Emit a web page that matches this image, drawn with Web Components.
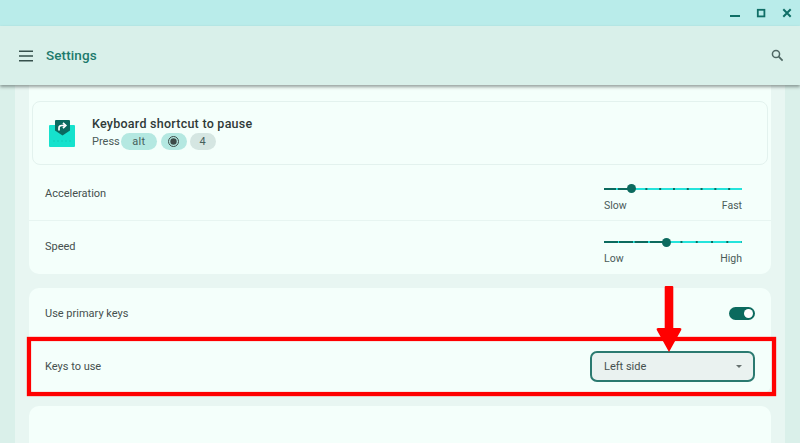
<!DOCTYPE html>
<html><head><meta charset="utf-8"><style>
html,body{margin:0;padding:0;height:443px;width:800px;overflow:hidden;background:#daf0ea;font-family:Roboto,"Liberation Sans",sans-serif;color:#3c4a47}
</style></head><body>
<settings-app></settings-app>
<script>
function def(name,css,html){
  customElements.define(name,class extends HTMLElement{
    constructor(){super();const s=this.attachShadow({mode:'open'});s.innerHTML='<style>'+css+'</style>'+(typeof html==='function'?html(this):html);}
  });
}
def('window-bar',`:host{display:flex;justify-content:flex-end;align-items:center;height:26px;background:#b9ecea;gap:10px;padding-right:5px;box-sizing:border-box;flex:none}
svg{width:16px;height:16px;display:block}`,
`<svg viewBox="0 0 16 16"><path d="M3 11h10" stroke="#0f6e66" stroke-width="2" fill="none"/></svg>
<svg viewBox="0 0 16 16"><rect x="4.8" y="4.8" width="6.6" height="6.6" fill="none" stroke="#0f6e66" stroke-width="1.8"/></svg>
<svg viewBox="0 0 16 16"><path d="M4.3 4.3l7.4 7.4M11.700 4.3l-7.4 7.4" stroke="#0f6e66" stroke-width="2" fill="none"/></svg>`);
def('app-bar',`:host{display:flex;align-items:center;height:59px;background:#d9f0ea;padding:0 17px 0 19px;box-sizing:border-box;flex:none;box-shadow:0 2px 3px rgba(60,70,68,.5);position:relative;z-index:1}
svg{display:block}
.t{font:500 13.5px Roboto,sans-serif;color:#1d7a6d;margin-left:13px;flex:1;letter-spacing:.1px;padding-bottom:2px}`,
`<svg width="14" height="12" viewBox="0 0 14 12"><path d="M0 1.2h14M0 6h14M0 10.8h14" stroke="#36504c" stroke-width="1.5"/></svg>
<span class="t">Settings</span>
<svg width="12.5" height="12.5" viewBox="0 0 14 14"><circle cx="5.6" cy="5.6" r="4" fill="none" stroke="#4f6764" stroke-width="1.7"/><path d="M8.6 8.6l4.4 4.4" stroke="#4f6764" stroke-width="2"/></svg>`);
def('key-chip',`:host{display:inline-flex;align-items:center;justify-content:center;height:17px;border-radius:9px;font-size:11px;color:#45605b;background:var(--bg,#b4e8e1);width:var(--w,36px);letter-spacing:.3px}`,`<slot></slot>`);
def('shortcut-card',`:host{display:flex;align-items:center;height:64px;margin:0 3px;border:1px solid #e3f2ee;border-radius:8px;box-sizing:border-box;padding-left:15px;flex:none}
svg{display:block;margin-right:16px}
.h{font:500 12.5px Roboto,sans-serif;color:#2f3a38;letter-spacing:.25px;margin-bottom:2px}
.p{display:flex;align-items:center;gap:3px;font-size:11px;color:#4a5b58}
.p span{margin-right:-2px}`,
`<svg width="28" height="30" viewBox="0 0 28 30"><rect x="1" y="7" width="26" height="22" rx="1" fill="#16e2cd"/><path d="M7 3a1 1 0 0 1 1-1h13a1 1 0 0 1 1 1v9.500l-7.500 5-7.500-5z" fill="#0a6a5f"/><path d="M11 12.500v-2.600c0-1.400 1-2.400 2.500-2.400h3M15 4.800l2.800 2.700-2.800 2.700" fill="none" stroke="#fff" stroke-width="1.700"/><path d="M5 23h18" stroke="#0fc2ad" stroke-width=".6" stroke-dasharray="2 2"/></svg>
<div><div class="h">Keyboard shortcut to pause</div>
<div class="p"><span>Press</span><key-chip>alt</key-chip><key-chip style="--w:26px;margin-left:1px"><svg width="13" height="13" viewBox="0 0 13 13" style="margin:0"><circle cx="6.500" cy="6.500" r="5" fill="none" stroke="#3c4a47" stroke-width="1"/><circle cx="6.500" cy="6.500" r="3.200" fill="#3c4a47"/></svg></key-chip><key-chip style="--w:26px;--bg:#d5e6e2">4</key-chip></div></div>`);
def('range-slider',`:host{display:block;width:138px;margin-top:13px}
.tr{height:2px;position:relative;background:#25e4dc;margin-bottom:10px}
.f{position:absolute;left:0;top:0;height:2px;width:var(--p);background:repeating-linear-gradient(90deg,#0c6a5e 0 calc(var(--s) - 1.500px),transparent calc(var(--s) - 1.500px) var(--s))}
.d{position:absolute;inset:0;background:radial-gradient(circle at 0.750px 1px,#0c6a5e 1px,transparent 1.200px) 0 0/var(--s,13.800px) 2px repeat-x}
.k{position:absolute;left:var(--p);top:-3.500px;width:9px;height:9px;margin-left:-4.500px;border-radius:50%;background:#0c6a5e}
.l{display:flex;justify-content:space-between;font-size:10.500px;line-height:12px;color:#4a5b58}`,
h=>`<div class="tr" style="--p:${h.getAttribute('p')};--s:${h.getAttribute('s')}"><div class="d"></div><div class="f"></div><div class="k"></div></div><div class="l"><span>${h.getAttribute('a')}</span><span>${h.getAttribute('b')}</span></div>`);
def('setting-row',`:host{display:flex;align-items:center;justify-content:space-between;height:53px;padding:0 29px var(--pb,1px) 16px;box-sizing:border-box;font-size:11px;color:#45504e;flex:none}
:host([line]){border-top:1px solid #e7f5f1}`,`<span><slot name="label"></slot></span><slot></slot>`);
def('toggle-switch',`:host{display:block;width:26px;height:13px;border-radius:7px;background:#0c6a5e;position:relative}
i{position:absolute;right:2px;top:2px;width:9px;height:9px;border-radius:50%;background:#fff}`,`<i></i>`);
def('select-box',`:host{display:flex;align-items:center;justify-content:space-between;width:165px;height:31px;box-sizing:border-box;border:2px solid #2b7a70;border-radius:7px;background:#eaf2f0;padding:0 11px 0 12px;font-size:11px;color:#45504e}
i{width:0;height:0;border:3px solid transparent;border-top:3.500px solid #66716f;border-bottom:0}`,`<slot></slot><i></i>`);
def('set-card',`:host{display:flex;flex-direction:column;background:#f4fffb;border-radius:10px;flex:none}`,`<slot></slot>`);
def('settings-app',`:host{display:flex;flex-direction:column;height:443px;position:relative;overflow:hidden}
.body{flex:1;margin:0 15px;background:#e8f6f2;padding:0 14px;display:flex;flex-direction:column;gap:12px;overflow:hidden}
.first{padding-top:16px;padding-bottom:1px;border-radius:0 0 10px 10px;margin-bottom:2px}
.second{--pb:2px}
.mk{position:absolute}
.box{left:27px;top:337px;width:749px;height:59px;border:4px solid #f00;box-sizing:border-box;box-shadow:0 0 1px #f00,inset 0 0 1px #f00}
.ar{left:656px;top:286px}`,
`<window-bar></window-bar><app-bar></app-bar>
<div class="body">
<set-card class="first"><shortcut-card></shortcut-card>
<setting-row style="margin-top:2px"><span slot="label">Acceleration</span><range-slider p="20%" s="13.8px" a="Slow" b="Fast"></range-slider></setting-row>
<setting-row line><span slot="label">Speed</span><range-slider p="45%" s="15.3px" a="Low" b="High"></range-slider></setting-row></set-card>
<set-card class="second"><setting-row><span slot="label">Use primary keys</span><toggle-switch style="margin-right:-13px"></toggle-switch></setting-row>
<setting-row><span slot="label">Keys to use</span><select-box style="margin-right:-13px">Left side</select-box></setting-row></set-card>
<set-card style="height:60px"></set-card></div>
<div class="mk box"></div>
<svg class="mk ar" width="26" height="67" viewBox="0 0 26 67"><path d="M8.700 1a1 1 0 0 1 1-1h6.600a1 1 0 0 1 1 1v41h6.500a1.500 1.500 0 0 1 1.400 2L13 66 .8 44a1.500 1.500 0 0 1 1.400-2h6.500z" fill="#f00"/></svg>`);
</script></body></html>
